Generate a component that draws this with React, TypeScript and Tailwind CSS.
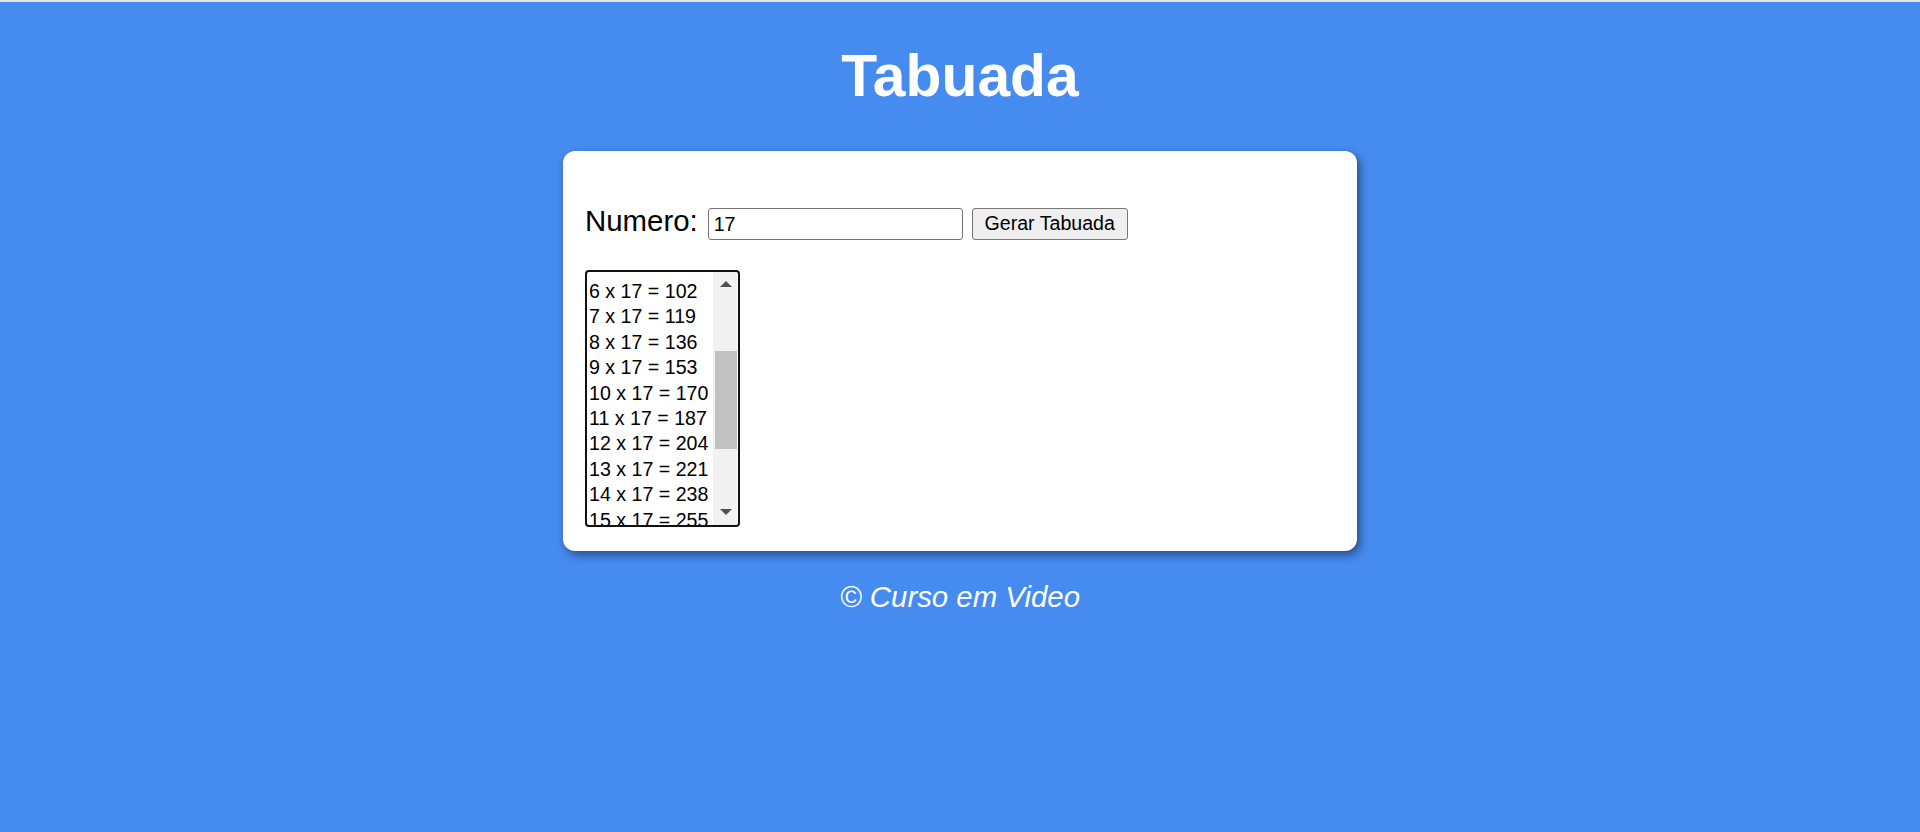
import React from "react"

const NUMERO = 17
// rows 1..5 sit above the visible part of the list (it is scrolled)
const visibleRows = Array.from({ length: 10 }, (_, i) => i + 6)

function ListScrollbar() {
  return (
    <div className="relative w-[24px] shrink-0 bg-[#f1f1f1]">
      {/* up arrow */}
      <div className="absolute left-[7px] top-[9px] h-0 w-0 border-x-[6px] border-b-[6px] border-x-transparent border-b-[#505050]" />
      {/* thumb */}
      <div className="absolute left-[2px] right-0 top-[79px] h-[98px] bg-[#c1c1c1]" />
      {/* down arrow */}
      <div className="absolute bottom-[10px] left-[7px] h-0 w-0 border-x-[6px] border-t-[6px] border-x-transparent border-t-[#505050]" />
    </div>
  )
}

function TabuadaList() {
  return (
    <div className="flex h-[257px] w-[155px] overflow-hidden rounded-[4px] border-[2.5px] border-[#111] bg-white">
      <div className="w-[126px] overflow-hidden pt-[7px]">
        {visibleRows.map((n) => (
          <div
            key={n}
            className="h-[25.4px] whitespace-nowrap pl-[2px] text-[19.6px] leading-[25.4px] text-black"
          >
            {n} x {NUMERO} = {n * NUMERO}
          </div>
        ))}
      </div>
      <ListScrollbar />
    </div>
  )
}

export default function App() {
  return (
    <div
      className="min-h-[832px] bg-[#468bef]"
      style={{ fontFamily: '"Liberation Sans", Arial, sans-serif' }}
    >
      <div className="h-[2px] bg-[#e4e4e4]" />
      <div className="flex flex-col items-center pt-[40px]">
        <h1 className="text-[58.8px] font-bold leading-[68px] text-white">Tabuada</h1>

        <div className="mt-[41px] h-[400px] w-[794px] rounded-[12px] bg-white px-[22px] pt-[57px] shadow-[3px_4px_10px_rgba(0,0,0,0.45)]">
          <div className="flex items-start">
            <label className="-mt-[3px] text-[29.4px] leading-[32px] text-black">Numero:</label>
            <input
              type="text"
              defaultValue="17"
              className="ml-[10px] h-[32px] w-[255px] rounded-[3px] border border-[#767676] bg-white pl-[5px] text-[19.6px] text-black outline-none"
            />
            <button className="ml-[9px] h-[32px] w-[156px] rounded-[3px] border border-[#767676] bg-[#efefef] text-[19.6px] text-black">
              Gerar Tabuada
            </button>
          </div>

          <div className="mt-[30px]">
            <TabuadaList />
          </div>
        </div>

        <p className="mt-[29px] text-[29.4px] italic leading-[34px] text-white">
          © Curso em Video
        </p>
      </div>
    </div>
  )
}
